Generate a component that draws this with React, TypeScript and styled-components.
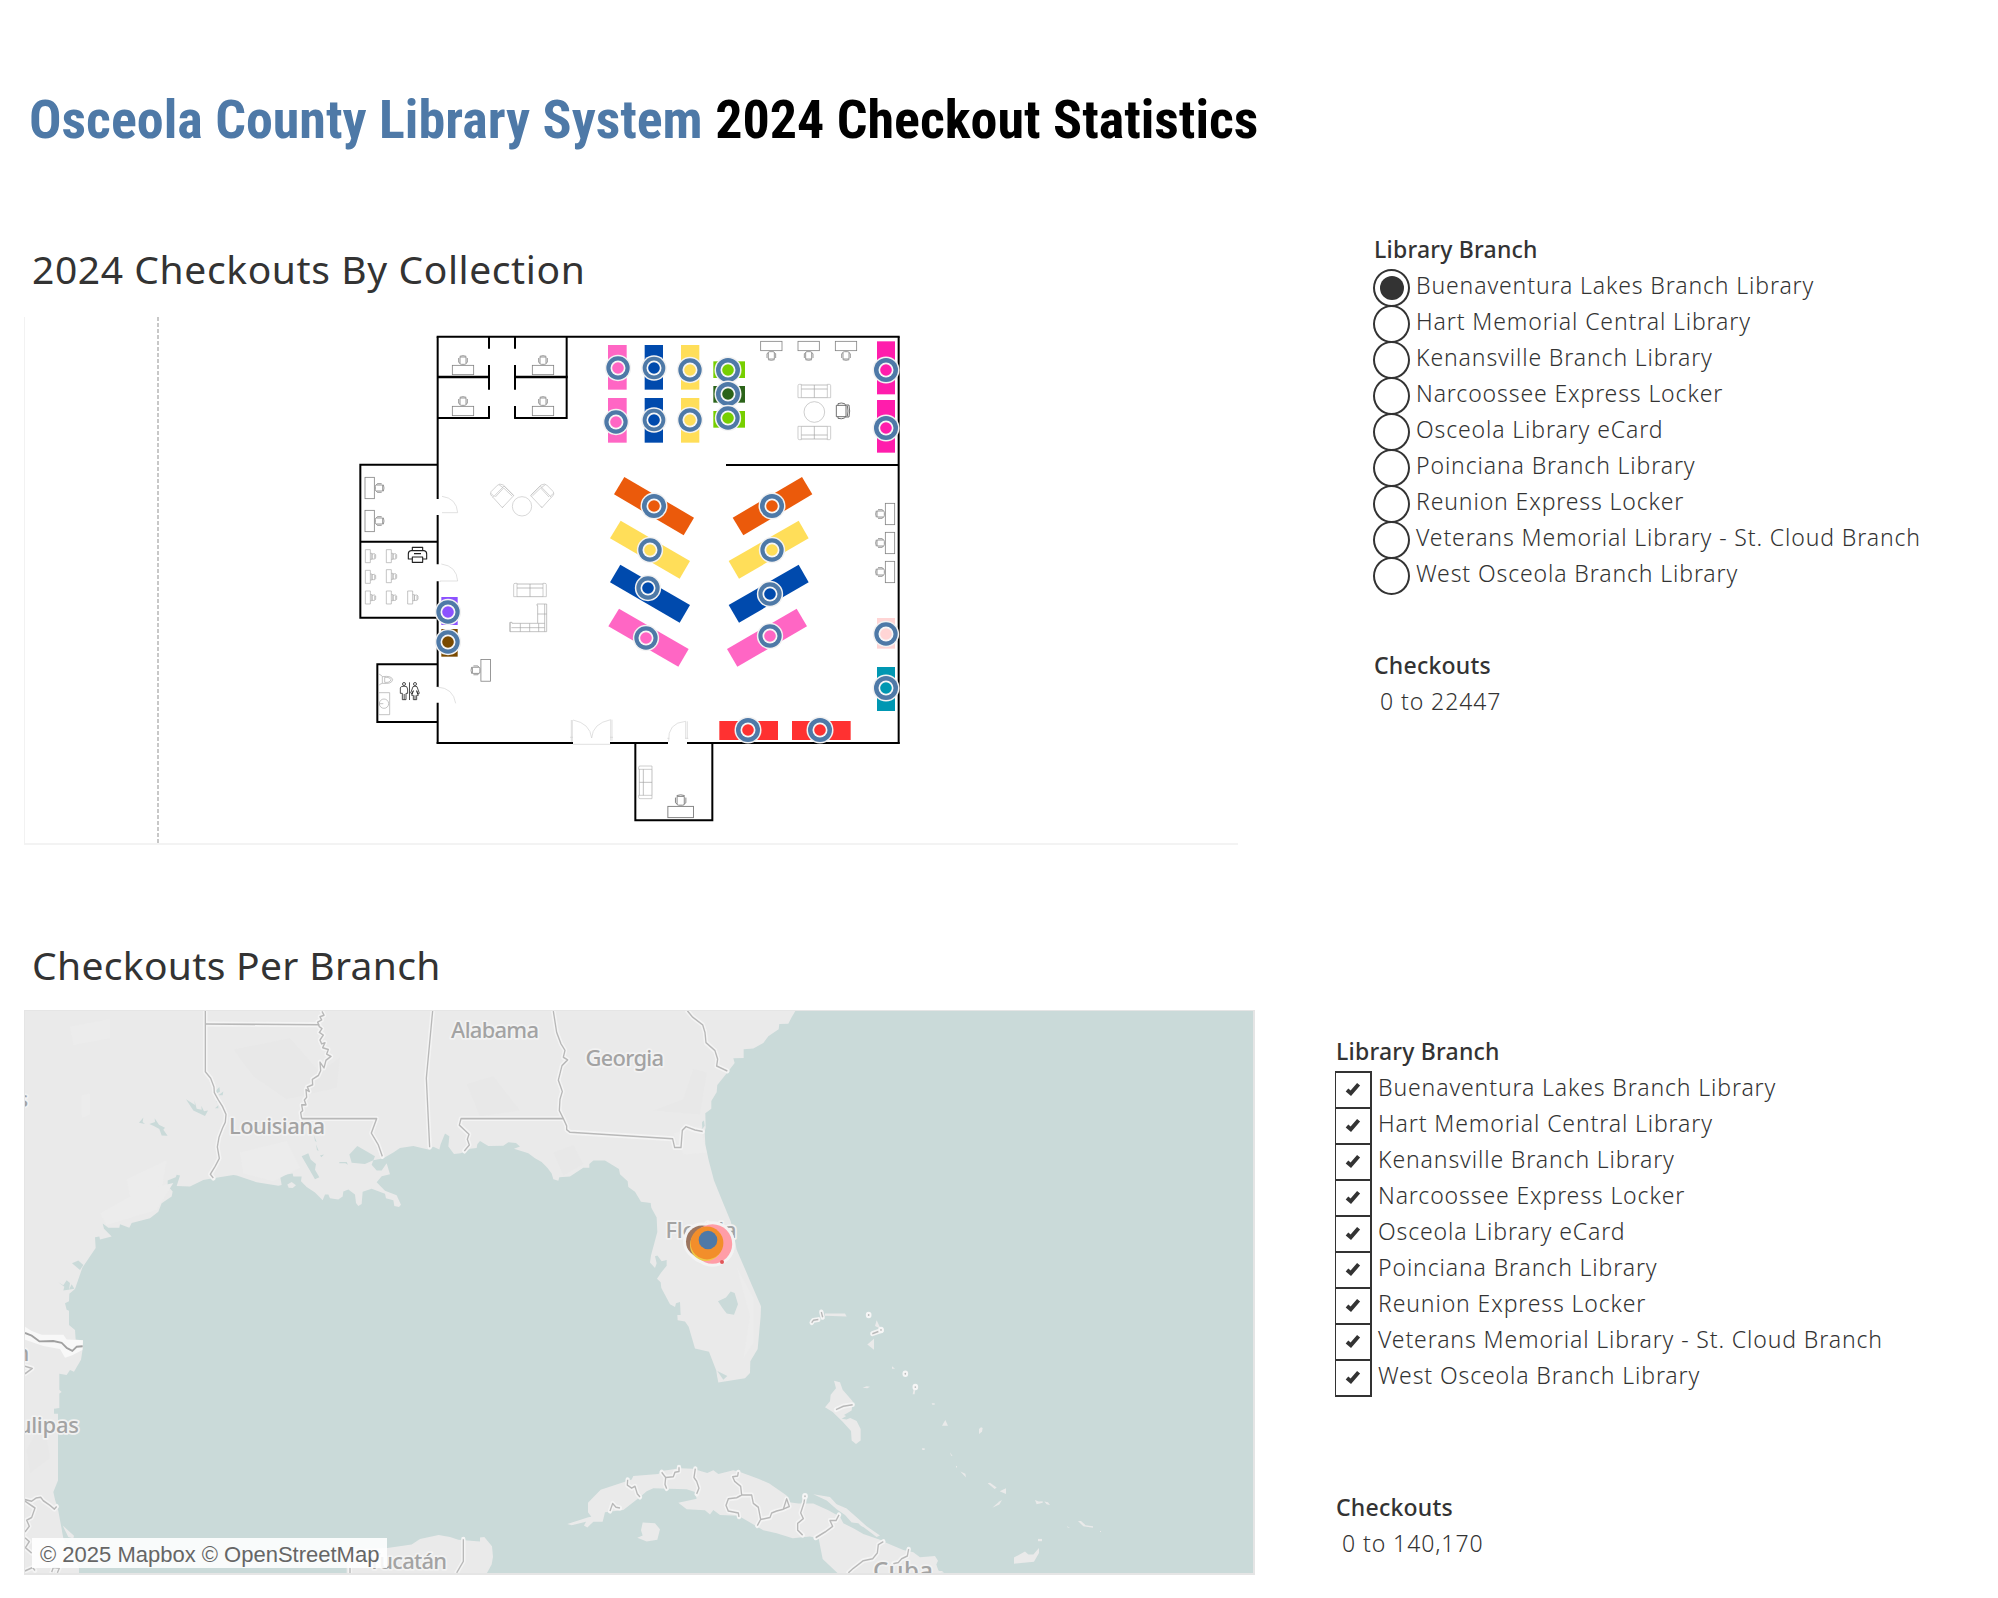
import React from "react";
import styled, { createGlobalStyle } from "styled-components";

const GlobalStyle = createGlobalStyle`
  html, body { margin: 0; padding: 0; background: #fff; }
  * { box-sizing: border-box; }
`;

const bodyFont = `"Noto Sans", "Open Sans", sans-serif`;

const Page = styled.main`
  width: 1998px;
  height: 1598px;
  padding: 85px 0 0 24px;
  overflow: hidden;
  display: flex;
  flex-direction: column;
  background: #fff;
  color: #333;
  font-family: ${bodyFont};
`;

const Title = styled.h1`
  margin: 0 0 0 5px;
  height: 155px;
  font: 700 54px/70px Roboto, sans-serif;
  font-stretch: 75%;
  white-space: nowrap;
  color: #000;
`;

const Accent = styled.span`
  color: #4e79a7;
`;

const Section = styled.section<{ $height: number }>`
  display: flex;
  height: ${(p) => p.$height}px;
`;

const Main = styled.div`
  width: 1231px;
  flex: none;
`;

const SectionTitle = styled.h2<{ $spacing: number; $height: number; $line: number }>`
  margin: 0;
  padding-left: 8px;
  height: ${(p) => p.$height}px;
  font-size: 39px;
  line-height: ${(p) => p.$line}px;
  font-weight: 400;
  letter-spacing: ${(p) => p.$spacing}px;
  white-space: nowrap;
`;

const Side = styled.aside<{ $left: number; $top: number }>`
  margin-left: ${(p) => p.$left}px;
  margin-top: ${(p) => p.$top}px;
`;

const FilterTitle = styled.h3`
  margin: 0;
  padding-left: 1px;
  height: 36px;
  font-size: 23px;
  line-height: 32px;
  font-weight: 500;
  letter-spacing: 0.22px;
  white-space: nowrap;
`;

const Options = styled.ul`
  margin: 0;
  padding: 0;
  list-style: none;
`;

const Option = styled.li`
  display: flex;
  height: 36px;
`;

const OptionText = styled.span`
  margin-left: 6px;
  font-size: 23px;
  line-height: 32px;
  font-weight: 300;
  letter-spacing: 0.88px;
  white-space: nowrap;
`;

const Radio = styled.span<{ $on?: boolean }>`
  display: flex;
  align-items: center;
  justify-content: center;
  flex: none;
  width: 37px;
  height: 38px;
  border: 2px solid #333;
  border-radius: 50%;
  &::after {
    content: "";
    width: 24px;
    height: 24px;
    border-radius: 50%;
    background: ${(p) => (p.$on ? "#333" : "transparent")};
  }
`;

const Box = styled.span`
  display: flex;
  align-items: center;
  justify-content: center;
  flex: none;
  width: 37px;
  height: 38px;
  padding-bottom: 2px;
  border: 2px solid #333;
  border-left-width: 1px;
`;

const Range = styled.div<{ $gap: number }>`
  margin-top: ${(p) => p.$gap}px;
`;

const RangeValue = styled.div`
  padding-left: 7px;
  font-size: 23px;
  line-height: 32px;
  font-weight: 300;
  letter-spacing: 0.92px;
`;

const PlanPanel = styled.div`
  width: 1214px;
  height: 528px;
  border-left: 1px solid #f2f2f2;
  border-bottom: 2px solid #f3f3f3;
  svg { display: block; margin-left: -1px; }
`;

const MapPanel = styled.div`
  position: relative;
  width: 1231px;
  height: 565px;
  border: 1px solid #e5e5e5;
  border-right-width: 2px;
  border-bottom-width: 2px;
  overflow: hidden;
  svg { display: block; margin: -1px; }
`;

const Attribution = styled.div`
  position: absolute;
  left: 7px;
  bottom: 5px;
  width: 355px;
  height: 30px;
  padding-left: 8px;
  background: rgba(255, 255, 255, 0.88);
  color: #666;
  font: 22px/33px "Liberation Sans", Arial, sans-serif;
  white-space: nowrap;
`;

const BRANCHES = [
  "Buenaventura Lakes Branch Library",
  "Hart Memorial Central Library",
  "Kenansville Branch Library",
  "Narcoossee Express Locker",
  "Osceola Library eCard",
  "Poinciana Branch Library",
  "Reunion Express Locker",
  "Veterans Memorial Library - St. Cloud Branch",
  "West Osceola Branch Library",
];

/* ---------- floor plan (drawn at three units per pixel) ---------- */

const PINK = "#ff66c4";
const BLUE = "#004aad";
const YELLOW = "#ffde59";
const ORANGE = "#eb5a0b";
const LIME = "#77cf00";
const MAGENTA = "#ff1dac";
const RED = "#ff3131";

const SHELVES: [number, number, number, number, string][] = [
  [804, 75, 56, 134, PINK],
  [804, 234, 56, 134, PINK],
  [914, 75, 55, 134, BLUE],
  [914, 234, 55, 134, BLUE],
  [1023, 75, 55, 134, YELLOW],
  [1023, 234, 55, 134, YELLOW],
  [1120, 124, 95, 50, LIME],
  [1120, 198, 95, 50, "#2b6319"],
  [1120, 273, 95, 50, LIME],
  [1611, 64, 54, 159, MAGENTA],
  [1611, 240, 54, 158, MAGENTA],
  [1611, 894, 54, 92, "#ffd5d5"],
  [1611, 1041, 54, 132, "#0097b2"],
  [1138, 1203, 176, 57, RED],
  [1356, 1203, 176, 57, RED],
  [304, 831, 49, 84, "#8c52ff"],
  [304, 927, 49, 83, "#7a4a00"],
];

const SLANTED: [string, string][] = [
  ["853,471 1062,593 1031,646 822,523", ORANGE],
  ["1386,471 1417,523 1210,646 1178,593", ORANGE],
  ["842,602 1050,723 1019,776 810,655", YELLOW],
  ["1376,602 1406,655 1197,776 1166,723", YELLOW],
  ["841,734 1050,855 1019,908 810,787", BLUE],
  ["1376,734 1406,787 1197,908 1166,855", BLUE],
  ["837,866 1046,987 1015,1040 805,919", PINK],
  ["1370,866 1401,919 1192,1040 1161,987", PINK],
];

const MARKS: [number, number, number, string][] = [
  [834, 144, 35, PINK],
  [828, 306, 35, PINK],
  [942, 144, 34, BLUE],
  [942, 300, 34, BLUE],
  [1050, 150, 35, YELLOW],
  [1050, 300, 35, YELLOW],
  [1164, 150, 36, LIME],
  [1164, 222, 36, "#2b6319"],
  [1164, 294, 35, LIME],
  [1638, 150, 36, MAGENTA],
  [1638, 324, 36, MAGENTA],
  [942, 558, 36, ORANGE],
  [1296, 558, 36, ORANGE],
  [930, 690, 35, YELLOW],
  [1296, 690, 35, YELLOW],
  [924, 804, 35, BLUE],
  [1290, 822, 35, BLUE],
  [918, 954, 35, PINK],
  [1290, 948, 35, PINK],
  [1638, 942, 35, "#ffd5d5"],
  [1638, 1104, 36, "#0097b2"],
  [1224, 1230, 36, RED],
  [1440, 1230, 36, RED],
  [324, 876, 35, "#8c52ff"],
  [324, 966, 35, "#7a4a00"],
];

const WALLS = [
  "M290,50H1679",
  "M1676,50V1271",
  "M293,50V537M293,585V733M293,784V1101M293,1148V1271",
  "M290,1269H699M810,1269H984M1041,1269H1679",
  "M447,50V86M447,135V209M447,258V296M525,50V86M525,135V209M525,258V296",
  "M293,294H449M523,294H683M680,50V296",
  "M292,434H61V893H290M61,665H292",
  "M292,1033H112V1206H292",
  "M886,1269V1501H1117V1269",
  "M1158,435H1676",
];

/* [center x, center y, rotation, scale] */
const DESKS: [number, number, number, number][] = [
  [369, 150, 0, 1],
  [609, 150, 0, 1],
  [369, 273, 0, 1],
  [609, 273, 0, 1],
  [89, 504, 90, 1],
  [89, 603, 90, 1],
  [1294, 78, 180, 1],
  [1406, 78, 180, 1],
  [1518, 78, 180, 1],
  [1650, 582, -90, 1],
  [1650, 669, -90, 1],
  [1650, 756, -90, 1],
  [437, 1051, -90, 1.02],
  [1022, 1476, 0, 1.2],
];

const CARRELS = [
  [75, 688], [138, 688], [75, 750], [138, 748], [75, 812], [138, 812], [202, 812],
];

const Desk = ({ at }: { at: [number, number, number, number] }) => (
  <g transform={`translate(${at[0]} ${at[1]}) rotate(${at[2]}) scale(${at[3]})`} fill="none" stroke="#828282" strokeWidth="2.4">
    <rect x="-32" y="-14" width="64" height="28" />
    <path d="M-9,-39H9V-20Q9,-17 5,-17H-5Q-9,-17 -9,-20ZM-10,-41Q0,-45 10,-41M-13,-36V-23M13,-36V-23M-13,-23L-9,-20M13,-23L9,-20" />
  </g>
);

const Sofa = ({ x, y, rotate = 0, flip = 1 }: { x: number; y: number; rotate?: number; flip?: number }) => (
  <g transform={`translate(${x} ${y}) rotate(${rotate}) scale(1 ${flip})`} fill="none" strokeWidth="2">
    <path d="M-49,20V-16Q-49,-20 -45,-20H-39V20ZM49,20V-16Q49,-20 45,-20H39V20Z" stroke="#b5b5b5" />
    <path d="M-39,-18H39M-39,-6H39M-39,20H39M0,-18V20" stroke="#a2a2a2" />
  </g>
);

const FloorPlan = () => (
  <svg width="1214" height="527" viewBox="-948 -9 3642 1581">
    <path d="M-546,-9V1572" stroke="#c8c8c8" strokeWidth="6" strokeDasharray="12 6" />
    <g fill="none" stroke="#000" strokeWidth="6">
      {WALLS.map((d) => <path key={d} d={d} />)}
      <path d="M293,171H449M523,171H683" strokeWidth="8" />
    </g>
    {DESKS.map((d, i) => <Desk key={i} at={d} />)}
    {CARRELS.map(([x, y], i) => (
      <g key={i} transform={`translate(${x} ${y})`} fill="none" stroke="#a8a8a8" strokeWidth="2">
        <path d="M1,1H16V40H1ZM16,12H21V30H16M21,14Q31,11 32,16V26Q31,31 21,29ZM29,15V28" />
      </g>
    ))}
    <Sofa x={1423} y={213} />
    <Sofa x={1423} y={339} flip={-1} />
    <Sofa x={570} y={810} />
    <Sofa x={916} y={1387} rotate={-90} />
    <g fill="none" stroke="#a6a6a6" strokeWidth="2">
      <path d="M591,852H620V935H510V907H516V910H593V857H591ZM514,923H614M614,852V935M593,882H620M593,910H614M541,910V935M569,910V935M596,910V935M510,907V935" />
      <circle cx="1423" cy="276" r="31" stroke="#b5b5b5" />
      <circle cx="546" cy="559" r="29" stroke="#c4c4c4" />
      {[[486, 527, -1], [607, 527, 1]].map(([x, y, s]) => (
        <g key={x} transform={`translate(${x} ${y}) scale(${s} 1)`} stroke="#bdbdbd">
          <path d="M-35,0L-6,-29L27,5L-1,36ZM-35,0L-32,-4L-4,-32Q8,-38 14,-31L33,-12Q37,-4 31,1L27,5M-3,-24L9,-33M24,2L33,-7M-1,36L-4,32M-30,1L-5,-23L20,4" />
        </g>
      ))}
    </g>
    <g fill="none" stroke="#555" strokeWidth="2.5">
      <path d="M1489,256H1518V290H1489ZM1494,256V251Q1504,247 1514,251L1517,256M1494,290V295Q1504,298 1514,294L1517,290M1518,255H1527Q1531,273 1527,291H1518M1522,257Q1526,273 1522,289" />
    </g>
    <g fill="none" stroke="#d2d2d2" strokeWidth="2">
      <path d="M306,529Q350,535 353,578H306M304,732Q350,738 353,783H300V786" />
      <path d="M292,1101Q340,1104 347,1150" />
      <path d="M694,1200V1265H697V1200M699,1200Q750,1210 755,1254Q758,1210 812,1199M812,1199V1262M816,1199V1262M699,1273H812M690,1252H699M810,1252H819" />
      <path d="M986,1265Q982,1208 1037,1204V1257M1042,1204V1257M982,1255H988M1036,1255H1045" />
    </g>
    <g fill="none" stroke="#222" strokeWidth="3.4" strokeLinejoin="round">
      <path d="M217,692V682H248V692M213,692H252Q260,693 260,702V717H248M217,717H205V702Q205,693 213,692M217,711H248V727H217ZM222,701H243" />
    </g>
    <g fill="none" stroke="#222" strokeWidth="2.4" strokeLinejoin="round">
      <circle cx="192" cy="1092" r="4.5" />
      <circle cx="225" cy="1092" r="4.5" />
      <path d="M184,1100Q192,1097 200,1100Q204,1104 203,1120H198V1139H187V1120H181V1104Q182,1101 184,1100ZM192.500,1122V1139M208.500,1087V1140" />
      <path d="M219,1100Q225,1097 231,1100L238,1120L233,1122L230,1112L235,1126H230V1139H220V1126H215L220,1112L216,1122L212,1119ZM225,1126V1139" />
    </g>
    <g fill="none" stroke="#a8a8a8" strokeWidth="2">
      <path d="M115,1063H118Q126,1066 127,1070V1090Q118,1092 116,1097M127,1070Q155,1066 158,1079Q156,1093 127,1090M134,1072Q150,1071 153,1079Q150,1089 134,1087Z" />
      <path d="M116,1118H149V1184H116Z" />
      <circle cx="132" cy="1151" r="14" />
      <path d="M119,1151H130M117,1147V1156" />
    </g>
    {SHELVES.map(([x, y, w, h, c], i) => <rect key={i} x={x} y={y} width={w} height={h} fill={c} />)}
    {SLANTED.map(([p, c]) => <polygon key={p} points={p} fill={c} />)}
    {MARKS.map(([x, y, r, c], i) => (
      <g key={i}>
        <circle cx={x} cy={y} r={r + 4.5} fill="#f2f2f2" />
        <circle cx={x} cy={y} r={r} fill="#4e79a7" />
        <circle cx={x} cy={y} r="22.5" fill="#f7f7f7" />
        <circle cx={x} cy={y} r="17.5" fill={c} />
      </g>
    ))}
  </svg>
);

/* ---------- map ---------- */

const MAINLAND =
  "M72,26H2388L2375,45 2365,62 2338,63 2336,77 2305,95 2290,113 2260,127 2231,129V152L2200,153 2204,165 2182,190 2152,223 2150,242 2134,265V285L2116,297 2117,335 2114,345 2116,378 2126,420 2142,473 2166,525 2192,580 2198,600 2210,655 2235,705 2248,732 2283,803 2282,830 2273,915 2251,947 2250,978 2235,992 2155,1003 2151,985 2149,972 2127,922 2085,914 2066,857 2055,843 2033,840 2032,826H2042L2040,792 2028,795 2025,805 2010,798 1984,755 1982,740 1971,731 1983,715 2000,697V682L1985,685 1972,670 1965,672 1970,690 1965,703 1950,688 1953,670 1972,608 1970,570 1954,545 1952,532 1923,529 1905,503 1885,490 1883,475 1860,457 1857,443 1815,421H1780L1768,430V440H1750L1710,463 1678,465 1675,474 1660,470 1655,455 1642,440 1625,425 1605,415 1585,402 1542,390 1560,384 1548,375 1525,373 1510,382 1465,383 1440,370 1432,378 1430,388 1410,390 1382,402 1362,404 1345,384 1348,357 1335,350 1322,378 1318,392 1300,385 1285,392 1265,388 1240,383 1200,388 1180,400 1150,415 1120,420 1115,432 1130,447H1145L1160,428 1170,457 1145,462 1130,478 1155,500 1190,512 1203,537 1197,543 1183,540 1180,525 1158,520 1155,508 1115,495 1088,503 1085,535 1075,540 1068,532 1065,510 1045,497 1030,502 1028,515 1015,523 990,520 985,510H975L968,525 945,505 920,490 903,475 905,463 880,463 878,455 840,460 845,485 835,487 770,478 710,460 700,459 635,468 610,472 570,489 530,488 540,460 530,458 527,465 503,473V487L518,502 515,515 485,533 475,555 450,572 395,585 388,597 360,588 358,597 325,597 308,586 312,600 335,620 300,628 298,620 285,622 287,650 247,702 225,758 208,770 207,790 195,795 200,812 207,815V852L225,865 227,890 248,892 249,910 243,943 222,975 210,970 200,983 178,980V1022L185,1028 178,1032V1070L162,1072V1085L174,1085V1260L160,1290 165,1310 175,1340 190,1411 237,1490V1507H72Z";

const LANDS = [
  MAINLAND,
  "M1040,1507V1440L1162,1437 1235,1428 1260,1413 1316,1403 1350,1408 1375,1415 1440,1420V1409L1453,1408 1476,1432 1479,1460 1475,1480 1458,1507Z",
  "M1702,1374L1765,1356 1774,1355 1764,1343V1318L1802,1284 1895,1257 1900,1248 1975,1243 1985,1235 2040,1228 2078,1229 2122,1240 2140,1233 2155,1243 2200,1233 2222,1238 2277,1256 2308,1268 2360,1299 2362,1316 2395,1320 2440,1320 2485,1338 2520,1355 2530,1372 2560,1385 2590,1400 2640,1415 2660,1424 2710,1442 2740,1448 2760,1461 2805,1458 2814,1470 2809,1480 2815,1495 2832,1507H2518L2468,1466 2456,1412 2430,1407 2378,1411 2330,1398 2290,1390 2240,1365 2215,1352 2160,1350 2140,1337 2130,1349 2115,1338 2060,1335 2035,1318 2090,1308 2085,1290 2060,1283 1960,1280 1940,1288 1920,1303 1895,1320 1870,1337 1815,1343 1808,1368H1780L1762,1383 1752,1378 1758,1368 1715,1377Z",
  "M1928,1370L1965,1372 1980,1388 1972,1415 1940,1420 1912,1410 1928,1404 1923,1390Z",
  "M2502,998L2520,1002 2528,1022 2558,1052 2555,1076 2532,1088 2570,1104 2582,1125V1155L2568,1164 2555,1155 2553,1130 2528,1106 2498,1080 2475,1068 2490,1052 2492,1035 2508,1018Z",
  "M2475,822H2535L2540,830 2475,828Z",
  "M2602,903L2622,888V917Z",
  "M2625,855L2630,840 2642,862Z",
  "M2588,1017L2600,1013 2610,1014 2602,1018Z",
  "M2440,1296L2490,1303 2510,1322 2540,1333 2575,1360 2600,1380 2640,1404 2630,1408 2590,1382 2555,1370 2535,1350 2510,1335 2480,1312Z",
  "M2826,1116L2836,1101 2844,1116Z",
  "M2937,1138V1125L2943,1120 2948,1122 2946,1132Z",
  "M2881,1236L2896,1242 2898,1252Z",
  "M2963,1267L2970,1266 2990,1278 2984,1282Z",
  "M2999,1288L3018,1280V1295Z",
  "M2977,1331L2998,1315 3006,1311 2998,1323Z",
  "M3105,1311L3116,1315 3128,1314V1318L3110,1322ZM3133,1315L3144,1317 3150,1324 3140,1322Z",
  "M3234,1366H3243L3257,1377 3279,1380V1384L3250,1380Z",
  "M3114,1413H3126V1419H3114Z",
  "M3042,1478V1462L3075,1446 3085,1454 3100,1454 3117,1437V1450L3102,1473Z",
  "M2676,960L2685,967H2676ZM2741,1020H2746L2744,1034H2738ZM2795,1057H2804V1061H2797ZM2766,1175H2774V1180H2767ZM2850,1186L2858,1196 2853,1194ZM2868,1222H2871V1226H2868ZM3201,1380L3210,1384 3203,1383ZM3300,1392H3303V1395H3300Z",
  "M862,484L875,477 888,486 878,493 866,492Z",
  "M188,1378L222,1405 220,1412 205,1408Z",
  "M2817,1497H2826L2832,1502H2815Z",
];

const SHADES = [
  ["M210,70L330,50V100L220,118Z", "#ececec"],
  ["M700,130L870,100 960,190 1020,150 1010,230 860,260 760,200Z", "#e8e8e8"],
  ["M720,400L860,370 900,440 820,475 730,455Z", "#ececec"],
  ["M380,470L500,420 480,520 400,560Z", "#ececec"],
  ["M245,250L270,245V300L245,310Z", "#ececec"],
  ["M300,560L420,500 520,480 470,550 320,590Z", "#ececec"],
  ["M1400,220L1480,200 1560,290 1440,305Z", "#e8e8e8"],
  ["M2080,180L2120,190 2100,300 1960,290 2050,260Z", "#e8e8e8"],
  ["M1660,400L1720,380 1750,430 1690,460Z", "#e8e8e8"],
  ["M2020,350L2100,330 2120,400 2050,405Z", "#ececec"],
  ["M2210,700L2260,780 2260,900 2230,940 2250,830Z", "#ececec"],
  ["M80,1180L130,1100 150,1200 90,1240Z", "#e8e8e8"],
];

const LAKES = [
  "M1048,405L1072,383 1125,410 1120,420 1095,430 1055,427Z",
  "M2154,790L2178,780 2192,764 2204,768 2214,798 2202,825 2180,822 2168,808Z",
  "M558,260L585,275 583,262 590,285 605,288 604,277 612,292 624,290 615,304 580,290Z",
  "M448,325L465,320 464,310 477,327 495,335 490,340 503,356 485,355 478,338 460,330Z",
  "M417,322L430,308 428,320 435,325Z",
  "M905,410L925,402 932,418 948,430 945,445 958,465 945,470 925,440Z",
  "M942,355L950,372 945,370ZM948,378L956,395 951,394ZM960,408L972,405 964,412Z",
  "M216,690L235,683 250,695 240,708Z",
  "M175,740L190,748 200,735 210,742 207,760 215,745 223,757 190,762 193,752Z",
  "M645,240L658,228 660,240 650,245ZM655,250L670,240 668,250ZM648,265L655,262 652,270ZM645,284L655,276V284Z",
  "M2152,973L2182,986 2170,996Z",
  "M1018,425H1040L1044,432 1036,428H1018Z",
  "M2106,320L2112,316 2114,330 2107,338Z",
  "M2525,1098L2540,1090 2560,1092 2540,1100Z",
  "M2555,1370L2575,1372 2590,1385 2570,1385Z",
  "M225,850L230,840 236,862 230,858Z",
];

const BORDERS = [
  "M616,28V188L632,205 642,228 643,243 655,262 668,280 678,300 676,320 668,335 657,360 652,385 658,415 645,437 631,457 640,467",
  "M616,63L958,65",
  "M966,30L972,40 960,44 965,52 953,58 958,70 966,75 958,85 970,92 960,105 965,115 975,112 968,125 985,130 980,142 993,148 978,158 972,178 960,163 962,185 955,198 937,208 938,222 922,228 928,240 918,235 920,255 913,262 918,275 905,275 908,290 902,295 905,311",
  "M905,311H1130L1114,349 1135,380 1147,410",
  "M1298,28L1279,205 1289,386",
  "M1660,29L1670,85 1683,115 1695,132 1690,150 1703,157 1686,172 1675,210 1687,240 1680,260 1678,290 1690,311 1700,330V340L1710,347 2018,364 2024,387H2043L2047,342 2058,332 2085,341 2108,345",
  "M1690,311H1383L1378,328 1407,352 1402,365 1408,380 1393,396",
  "M2062,28L2078,45 2108,65 2115,85 2118,112 2145,133 2153,155 2150,173 2182,186",
  "M75,1310L95,1314 108,1306 122,1304 130,1313 150,1325 163,1335 170,1328M75,1314L105,1332 95,1357 80,1364 88,1380 75,1395M75,1410L88,1420 76,1436 95,1450M75,1497L98,1488 105,1496M155,1500L160,1488 178,1490 172,1502",
  "M75,960L97,966 75,980",
  "M1050,1507V1488M1390,1414V1472L1370,1502",
  "M1883,1258L1882,1272 1895,1280 1905,1275 1912,1295 1920,1303M1830,1340L1838,1320 1848,1330 1860,1332",
  "M1985,1238L1997,1252 2020,1250 2025,1238 2037,1236V1225M1997,1252L1995,1270 2000,1281",
  "M2086,1229L2082,1252 2090,1262 2097,1280 2090,1295",
  "M2215,1238L2213,1248 2198,1250 2204,1262 2222,1275 2225,1298 2255,1298 2260,1320 2275,1330 2282,1362 2272,1378M2225,1298L2210,1305 2185,1308 2178,1325 2185,1340 2215,1345 2217,1355M2282,1362L2310,1357 2315,1345 2330,1340 2350,1335 2360,1308 2368,1328 2350,1335",
  "M2415,1302L2412,1318 2402,1345 2410,1360 2393,1372V1390L2408,1403",
  "M2517,1350L2508,1365 2490,1365 2498,1380 2475,1395 2447,1410",
  "M2650,1420L2635,1428 2632,1450 2618,1465 2590,1470 2560,1490 2545,1502M2726,1440L2722,1458 2705,1465 2695,1475 2680,1478",
  "M2435,846L2440,840 2455,838M2464,818L2468,832M2617,875L2645,866M2508,1074L2530,1065 2558,1061",
];

const DOTS = [[2606, 826], [2643, 865], [2716, 980], [2746, 1015], [2415, 1301]];

const LABELS: [string, number, number, number, number][] = [
  ["Alabama", 427, 28, 88, 22],
  ["Georgia", 561.5, 56, 78.5, 22],
  ["Louisiana", 205, 124, 96, 22],
  ["Florida", 641.5, 228, 71, 22],
  ["Tamaulipas", -62, 423, 117, 22],
  ["Yucatán", 344, 559, 79, 22],
  ["Cuba", 849, 569, 60, 24],
];

const BUBBLES: [number, number, number, string][] = [
  [678, 231.5, 16, "#9c755f"],
  [688.5, 234, 19.7, "#ff9da7"],
  [682, 235, 16, "#edc948"],
  [683, 233, 16.4, "#f28e2b"],
  [684, 230, 9.3, "#4e79a7"],
  [698, 252, 2, "#e15759"],
];

const BranchMap = () => (
  <svg width="1231" height="565" viewBox="0 0 1231 565">
    <rect width="1231" height="565" fill="#cadad9" />
    <g transform="translate(-24 -10) scale(0.33333 0.38139)">
      {LANDS.map((d, i) => <path key={i} d={d} fill="#eaeaea" />)}
      {SHADES.map(([d, c]) => <path key={d} d={d} fill={c} />)}
      {LAKES.map((d, i) => <path key={i} d={d} fill="#cadad9" />)}
      <path d="M72,855L95,868 125,878 190,878 200,890 249,892 247,918 215,932 195,938 180,915 130,907 72,890Z" fill="#f8f8f8" />
      <path d="M75,873L95,880 118,895 160,894 185,899 200,912 217,920 230,909 248,908" fill="none" stroke="#a0a0a0" strokeWidth="5" />
      <g fill="none" stroke="#f4f4f4" strokeWidth="13" strokeLinejoin="round" strokeLinecap="round">
        {BORDERS.map((d, i) => <path key={i} d={d} />)}
      </g>
      <g fill="none" stroke="#b8b8b8" strokeWidth="4" strokeLinejoin="round">
        {BORDERS.map((d, i) => <path key={i} d={d} />)}
      </g>
      {DOTS.map(([x, y]) => (
        <g key={x}>
          <circle cx={x} cy={y} r="8.5" fill="#f6f6f6" />
          <circle cx={x} cy={y} r="2.5" fill="#bbb" />
        </g>
      ))}
    </g>
    <g fontFamily={bodyFont} fontWeight="500" fill="#a3a3a3" stroke="#f2f2f2" strokeWidth="3.5" strokeLinejoin="round" paintOrder="stroke">
      {LABELS.map(([t, x, y, w, s]) => (
        <text key={t} x={x} y={y} textLength={w} fontSize={s}>{t}</text>
      ))}
      <text x="-6.5" y="97" fontSize="22">s</text>
      <text x="-8.5" y="351" fontSize="22">n</text>
    </g>
    {BUBBLES.slice(0, 4).map(([x, y, r], i) => <circle key={i} cx={x} cy={y} r={r + 3} fill="#f3f3f3" />)}
    {BUBBLES.map(([x, y, r, c], i) => <circle key={i} cx={x} cy={y} r={r} fill={c} />)}
  </svg>
);

const Check = () => (
  <svg width="16" height="14" viewBox="0 0 16 14">
    <path d="M2,8L5.800,11.200L13.600,2.200" fill="none" stroke="#333" strokeWidth="4" />
  </svg>
);

export default function App() {
  return (
    <>
      <GlobalStyle />
      <Page>
        <Title>
          <Accent>Osceola County Library System</Accent> 2024 Checkout Statistics
        </Title>
        <Section $height={697}>
          <Main>
            <SectionTitle $spacing={0.6} $height={77} $line={57}>2024 Checkouts By Collection</SectionTitle>
            <PlanPanel><FloorPlan /></PlanPanel>
          </Main>
          <Side $left={118} $top={-7}>
            <FilterTitle>Library Branch</FilterTitle>
            <Options>
              {BRANCHES.map((b, i) => (
                <Option key={b}><Radio $on={i === 0} /><OptionText>{b}</OptionText></Option>
              ))}
            </Options>
            <Range $gap={56}>
              <FilterTitle>Checkouts</FilterTitle>
              <RangeValue>0 to 22447</RangeValue>
            </Range>
          </Side>
        </Section>
        <Section $height={650}>
          <Main>
            <SectionTitle $spacing={0.32} $height={73} $line={55}>Checkouts Per Branch</SectionTitle>
            <MapPanel>
              <BranchMap />
              <Attribution>© 2025 Mapbox © OpenStreetMap</Attribution>
            </MapPanel>
          </Main>
          <Side $left={80} $top={98}>
            <FilterTitle>Library Branch</FilterTitle>
            <Options>
              {BRANCHES.map((b) => (
                <Option key={b}><Box><Check /></Box><OptionText>{b}</OptionText></Option>
              ))}
            </Options>
            <Range $gap={96}>
              <FilterTitle>Checkouts</FilterTitle>
              <RangeValue>0 to 140,170</RangeValue>
            </Range>
          </Side>
        </Section>
      </Page>
    </>
  );
}
